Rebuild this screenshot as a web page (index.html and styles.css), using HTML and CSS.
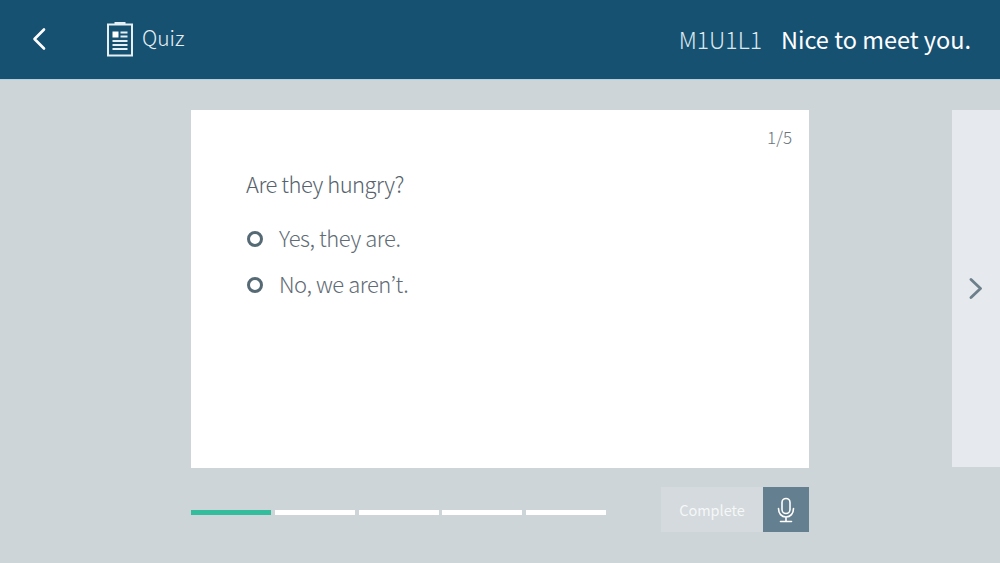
FILE: index.html
```html
<!DOCTYPE html>
<html>
<head>
  <meta charset="utf-8">
  <link rel="stylesheet" href="styles.css">
</head>
<body>
  <div class="header">
    <div class="back">
      <svg width="16" height="24" viewBox="0 0 16 24" fill="none" stroke="#fff" stroke-width="2.6" stroke-linecap="round" stroke-linejoin="round">
        <path d="M12 2.5 2.500 12 12 21.500" />
      </svg>
    </div>
    <div class="title">
      <svg class="quiz-icon" width="28" height="36" viewBox="0 0 28 36" fill="none">
        <rect x="2" y="3.500" width="24" height="31" stroke="#e6f0f4" stroke-width="2" />
        <rect x="8.500" y="1" width="11" height="3" fill="#e6f0f4" />
        <rect x="6.500" y="10.500" width="6" height="6" fill="#fff" />
        <path d="M14.500 11.500h7M14.500 15.500h7M6.500 20h15M6.500 24h15M6.500 28h15" stroke="#e6f0f4" stroke-width="2" />
      </svg>
      <span>Quiz</span>
    </div>
    <div class="lesson">
      <span class="code">M1U1L1</span>
      <span class="name">Nice to meet you.</span>
    </div>
  </div>

  <div class="main">
    <div class="center">
      <div class="card">
        <div class="count">1/5</div>
        <div class="question">Are they hungry?</div>
        <div class="option"><span class="radio"></span>Yes, they are.</div>
        <div class="option"><span class="radio"></span>No, we aren’t.</div>
      </div>
      <div class="bottom">
        <div class="progress">
          <div class="step active"></div>
          <div class="step"></div>
          <div class="step"></div>
          <div class="step"></div>
          <div class="step"></div>
        </div>
        <div class="actions">
          <div class="complete">Complete</div>
          <div class="mic">
            <svg width="18" height="26" viewBox="0 0 18 26" fill="none" stroke="#fff" stroke-width="1.600" stroke-linecap="round">
              <rect x="5" y="1.500" width="8" height="15" rx="4" />
              <path d="M1.500 11.500c0 5 3 8.500 7.500 8.500s7.500-3.500 7.500-8.500M9 20v4.500M3.500 24.500h11" />
            </svg>
          </div>
        </div>
      </div>
    </div>
    <div class="next">
      <svg width="14" height="22" viewBox="0 0 14 22" fill="none" stroke="#6c7f8b" stroke-width="2.800" stroke-linecap="round" stroke-linejoin="round">
        <path d="M2 1.500 11.500 10.500 2 19.500" />
      </svg>
    </div>
  </div>
</body>
</html>
```

FILE: styles.css
```css
* {
  margin: 0;
  padding: 0;
  box-sizing: border-box;
}

body {
  width: 1000px;
  height: 563px;
  overflow: hidden;
  background: #ced5d9;
  font-family: "Noto Sans CJK KR", "Noto Sans", sans-serif;
  font-weight: 300;
}

.header {
  height: 80px;
  display: flex;
  align-items: center;
  padding: 0 29px 2px 32px;
  background: #175172;
  border-bottom: 1px solid #b4cfdd;
  color: #fff;
}

.back {
  width: 74px;
  display: flex;
}

.title {
  display: flex;
  align-items: center;
  gap: 8px;
  font-size: 21px;
  color: #e6f0f4;
}

.title span {
  margin-bottom: 4px;
}

.lesson {
  margin-left: auto;
  display: flex;
  align-items: baseline;
  gap: 19px;
}

.code {
  font-size: 23px;
  color: #dbe8ee;
}

.name {
  font-size: 23.500px;
  font-weight: 400;
}

.main {
  display: flex;
  padding: 30px 0 0 191px;
}

.center {
  width: 618px;
}

.card {
  height: 358px;
  padding: 15px 17px 0 55px;
  background: #fff;
  color: #56636d;
}

.count {
  text-align: right;
  font-size: 17px;
  line-height: 24px;
  color: #6a747c;
}

.question {
  margin-top: 19px;
  font-size: 22px;
  letter-spacing: -0.500px;
  line-height: 30px;
  margin-bottom: 16px;
}

.option {
  display: flex;
  align-items: center;
  height: 46px;
  font-size: 22px;
  letter-spacing: -0.450px;
  color: #5f6c75;
}

.radio {
  width: 16px;
  height: 16px;
  margin: 4px 16px 0 1px;
  border: 3px solid #566a75;
  border-radius: 50%;
}

.bottom {
  display: flex;
  justify-content: space-between;
  align-items: center;
  margin-top: 19px;
}

.progress {
  display: flex;
  gap: 3.750px;
  margin-top: 5px;
}

.step {
  width: 80px;
  height: 5px;
  background: #fff;
}

.step.active {
  background: #33bd9c;
}

.actions {
  display: flex;
}

.complete {
  width: 102px;
  height: 45px;
  background: #d4dadd;
  color: #f5f7f8;
  font-size: 14.500px;
  font-weight: 400;
  line-height: 45px;
  text-align: center;
}

.mic {
  width: 46px;
  height: 45px;
  display: flex;
  align-items: center;
  justify-content: center;
  background: #647f8f;
}

.next {
  width: 48px;
  height: 357px;
  margin-left: 143px;
  display: flex;
  align-items: center;
  justify-content: center;
  background: #e6e9ed;
}
```
